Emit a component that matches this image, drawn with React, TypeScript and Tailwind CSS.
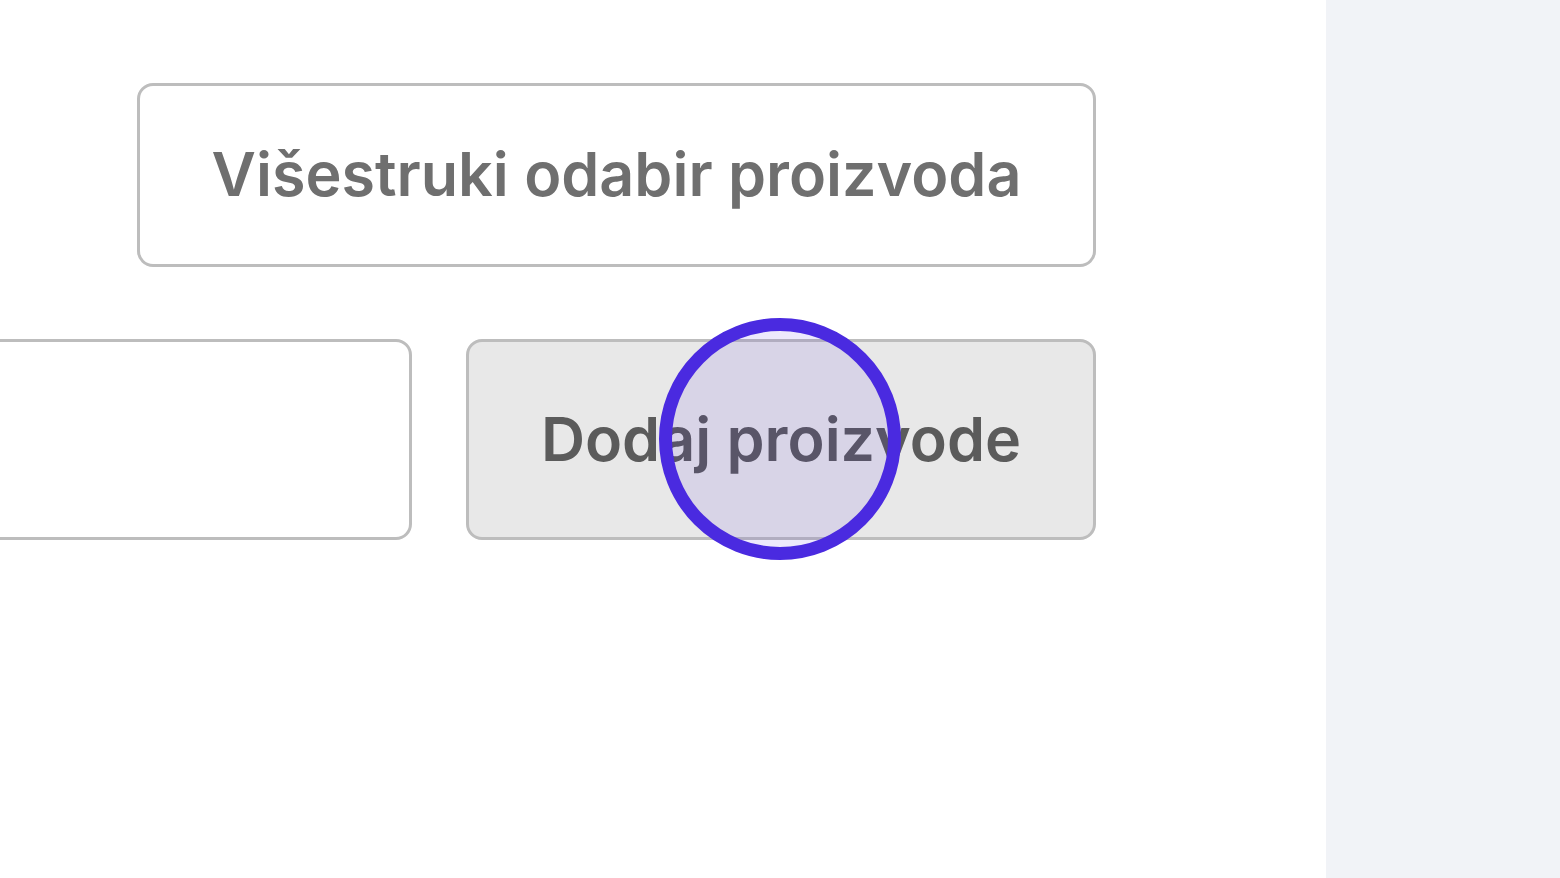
// Zoomed product form: multi-select + add products, with a click marker over the button
export default function App() {
  return (
    <div className="relative flex h-[878px] w-full overflow-hidden bg-white" style={{ fontFamily: 'Inter, "Noto Sans", sans-serif' }}>
      <main className="flex-1 pt-[83px] pr-[230px]">
        <div className="flex justify-end">
          <button className="flex h-[184px] w-[959px] items-center justify-center rounded-[16px] border-[3px] border-[#bdbdbd] bg-white text-[61px] font-semibold text-[#6f6f6f]">
            Višestruki odabir proizvoda
          </button>
        </div>
        <div className="mt-[72px] flex gap-[54px]">
          <input className="-ml-[20px] h-[201px] flex-1 rounded-[16px] border-[3px] border-[#bdbdbd] bg-white" />
          <button className="flex h-[201px] w-[630px] items-center justify-center rounded-[16px] border-[3px] border-[#bdbdbd] bg-[#e8e8e8] text-[61px] font-semibold text-[#5b5b5b]">
            Dodaj proizvode
          </button>
        </div>
      </main>
      <aside className="w-[234px] bg-[#f1f3f7]" />
      {/* click marker */}
      <div className="pointer-events-none absolute left-[659px] top-[318px] h-[242px] w-[242px] rounded-full border-[13px] border-[#4a2ae0] bg-[#4a2ae0]/10" />
    </div>
  );
}
